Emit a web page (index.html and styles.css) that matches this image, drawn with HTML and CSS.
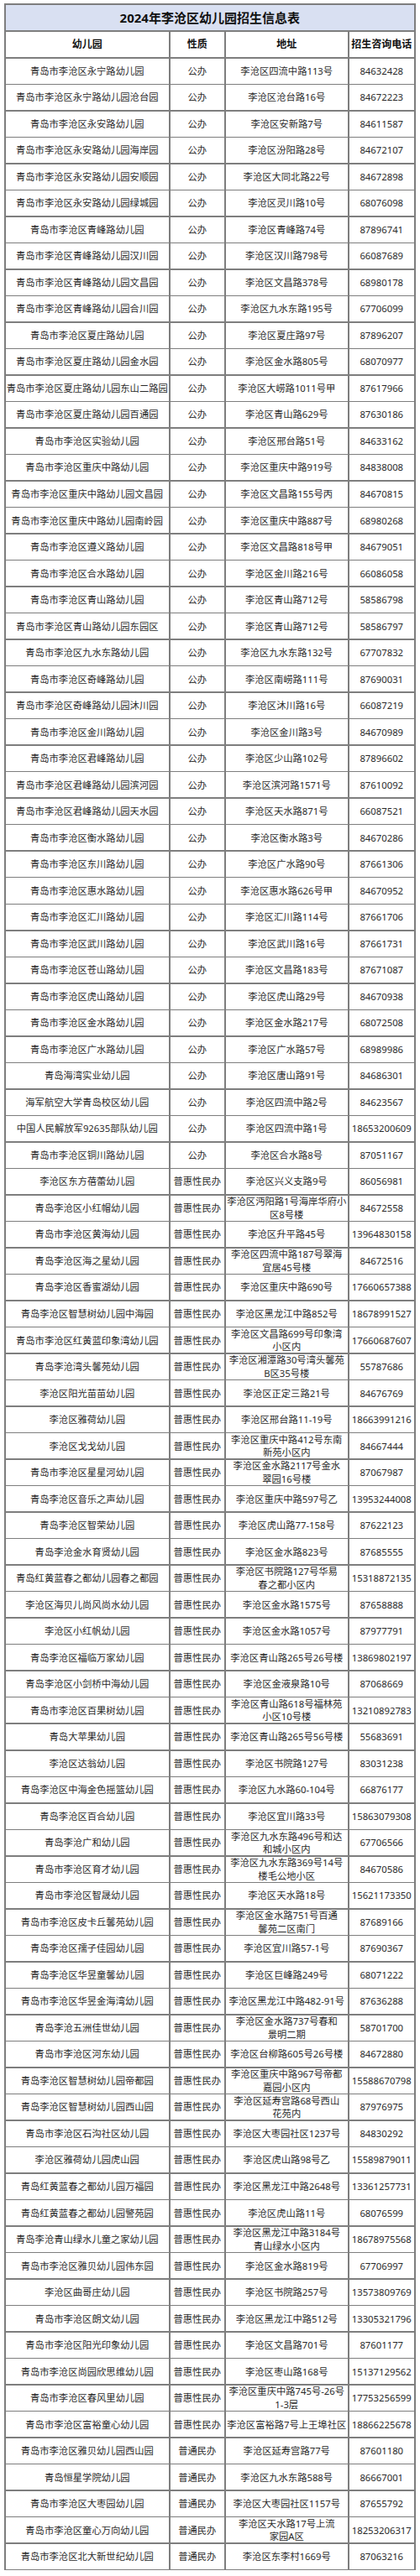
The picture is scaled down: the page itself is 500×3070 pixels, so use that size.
FILE: index.html
```html
<!DOCTYPE html>
<html lang="zh-CN">
<head>
<meta charset="utf-8">
<title>2024年李沧区幼儿园招生信息表</title>
<link rel="stylesheet" href="styles.css">
</head>
<body>
<div class="sheet">
<div class="title">2024年李沧区幼儿园招生信息表</div>
<div class="row head"><div>幼儿园</div><div>性质</div><div>地址</div><div>招生咨询电话</div></div>
<div class="row"><div>青岛市李沧区永宁路幼儿园</div><div>公办</div><div>李沧区四流中路113号</div><div>84632428</div></div>
<div class="row"><div>青岛市李沧区永宁路幼儿园沧台园</div><div>公办</div><div>李沧区沧台路16号</div><div>84672223</div></div>
<div class="row"><div>青岛市李沧区永安路幼儿园</div><div>公办</div><div>李沧区安新路7号</div><div>84611587</div></div>
<div class="row"><div>青岛市李沧区永安路幼儿园海岸园</div><div>公办</div><div>李沧区汾阳路28号</div><div>84672107</div></div>
<div class="row"><div>青岛市李沧区永安路幼儿园安顺园</div><div>公办</div><div>李沧区大同北路22号</div><div>84672898</div></div>
<div class="row"><div>青岛市李沧区永安路幼儿园绿城园</div><div>公办</div><div>李沧区灵川路10号</div><div>68076098</div></div>
<div class="row"><div>青岛市李沧区青峰路幼儿园</div><div>公办</div><div>李沧区青峰路74号</div><div>87896741</div></div>
<div class="row"><div>青岛市李沧区青峰路幼儿园汉川园</div><div>公办</div><div>李沧区汉川路798号</div><div>66087689</div></div>
<div class="row"><div>青岛市李沧区青峰路幼儿园文昌园</div><div>公办</div><div>李沧区文昌路378号</div><div>68980178</div></div>
<div class="row"><div>青岛市李沧区青峰路幼儿园合川园</div><div>公办</div><div>李沧区九水东路195号</div><div>67706099</div></div>
<div class="row"><div>青岛市李沧区夏庄路幼儿园</div><div>公办</div><div>李沧区夏庄路97号</div><div>87896207</div></div>
<div class="row"><div>青岛市李沧区夏庄路幼儿园金水园</div><div>公办</div><div>李沧区金水路805号</div><div>68070977</div></div>
<div class="row"><div>青岛市李沧区夏庄路幼儿园东山二路园</div><div>公办</div><div>李沧区大崂路1011号甲</div><div>87617966</div></div>
<div class="row"><div>青岛市李沧区夏庄路幼儿园百通园</div><div>公办</div><div>李沧区青山路629号</div><div>87630186</div></div>
<div class="row"><div>青岛市李沧区实验幼儿园</div><div>公办</div><div>李沧区邢台路51号</div><div>84633162</div></div>
<div class="row"><div>青岛市李沧区重庆中路幼儿园</div><div>公办</div><div>李沧区重庆中路919号</div><div>84838008</div></div>
<div class="row"><div>青岛市李沧区重庆中路幼儿园文昌园</div><div>公办</div><div>李沧区文昌路155号丙</div><div>84670815</div></div>
<div class="row"><div>青岛市李沧区重庆中路幼儿园南岭园</div><div>公办</div><div>李沧区重庆中路887号</div><div>68980268</div></div>
<div class="row"><div>青岛市李沧区遵义路幼儿园</div><div>公办</div><div>李沧区文昌路818号甲</div><div>84679051</div></div>
<div class="row"><div>青岛市李沧区合水路幼儿园</div><div>公办</div><div>李沧区金川路216号</div><div>66086058</div></div>
<div class="row"><div>青岛市李沧区青山路幼儿园</div><div>公办</div><div>李沧区青山路712号</div><div>58586798</div></div>
<div class="row"><div>青岛市李沧区青山路幼儿园东园区</div><div>公办</div><div>李沧区青山路712号</div><div>58586797</div></div>
<div class="row"><div>青岛市李沧区九水东路幼儿园</div><div>公办</div><div>李沧区九水东路132号</div><div>67707832</div></div>
<div class="row"><div>青岛市李沧区奇峰路幼儿园</div><div>公办</div><div>李沧区南崂路111号</div><div>87690031</div></div>
<div class="row"><div>青岛市李沧区奇峰路幼儿园沐川园</div><div>公办</div><div>李沧区沐川路16号</div><div>66087219</div></div>
<div class="row"><div>青岛市李沧区金川路幼儿园</div><div>公办</div><div>李沧区金川路3号</div><div>84670989</div></div>
<div class="row"><div>青岛市李沧区君峰路幼儿园</div><div>公办</div><div>李沧区少山路102号</div><div>87896602</div></div>
<div class="row"><div>青岛市李沧区君峰路幼儿园滨河园</div><div>公办</div><div>李沧区滨河路1571号</div><div>87610092</div></div>
<div class="row"><div>青岛市李沧区君峰路幼儿园天水园</div><div>公办</div><div>李沧区天水路871号</div><div>66087521</div></div>
<div class="row"><div>青岛市李沧区衡水路幼儿园</div><div>公办</div><div>李沧区衡水路3号</div><div>84670286</div></div>
<div class="row"><div>青岛市李沧区东川路幼儿园</div><div>公办</div><div>李沧区广水路90号</div><div>87661306</div></div>
<div class="row"><div>青岛市李沧区惠水路幼儿园</div><div>公办</div><div>李沧区惠水路626号甲</div><div>84670952</div></div>
<div class="row"><div>青岛市李沧区汇川路幼儿园</div><div>公办</div><div>李沧区汇川路114号</div><div>87661706</div></div>
<div class="row"><div>青岛市李沧区武川路幼儿园</div><div>公办</div><div>李沧区武川路16号</div><div>87661731</div></div>
<div class="row"><div>青岛市李沧区苍山路幼儿园</div><div>公办</div><div>李沧区文昌路183号</div><div>87671087</div></div>
<div class="row"><div>青岛市李沧区虎山路幼儿园</div><div>公办</div><div>李沧区虎山路29号</div><div>84670938</div></div>
<div class="row"><div>青岛市李沧区金水路幼儿园</div><div>公办</div><div>李沧区金水路217号</div><div>68072508</div></div>
<div class="row"><div>青岛市李沧区广水路幼儿园</div><div>公办</div><div>李沧区广水路57号</div><div>68989986</div></div>
<div class="row"><div>青岛海湾实业幼儿园</div><div>公办</div><div>李沧区唐山路91号</div><div>84686301</div></div>
<div class="row"><div>海军航空大学青岛校区幼儿园</div><div>公办</div><div>李沧区四流中路2号</div><div>84623567</div></div>
<div class="row"><div>中国人民解放军92635部队幼儿园</div><div>公办</div><div>李沧区四流中路1号</div><div>18653200609</div></div>
<div class="row"><div>青岛市李沧区铜川路幼儿园</div><div>公办</div><div>李沧区合水路8号</div><div>87051167</div></div>
<div class="row"><div>李沧区东方蓓蕾幼儿园</div><div>普惠性民办</div><div>李沧区兴义支路9号</div><div>86056981</div></div>
<div class="row"><div>青岛李沧区小红帽幼儿园</div><div>普惠性民办</div><div>李沧区沔阳路1号海岸华府小<br>区8号楼</div><div>84672558</div></div>
<div class="row"><div>青岛市李沧区黄海幼儿园</div><div>普惠性民办</div><div>李沧区升平路45号</div><div>13964830158</div></div>
<div class="row"><div>青岛李沧区海之星幼儿园</div><div>普惠性民办</div><div>李沧区四流中路187号翠海<br>宜居45号楼</div><div>84672516</div></div>
<div class="row"><div>青岛李沧区香蜜湖幼儿园</div><div>普惠性民办</div><div>李沧区重庆中路690号</div><div>17660657388</div></div>
<div class="row"><div>青岛李沧区智慧树幼儿园中海园</div><div>普惠性民办</div><div>李沧区黑龙江中路852号</div><div>18678991527</div></div>
<div class="row"><div>青岛市李沧区红黄蓝印象湾幼儿园</div><div>普惠性民办</div><div>李沧区文昌路699号印象湾<br>小区内</div><div>17660687607</div></div>
<div class="row"><div>青岛李沧湾头馨苑幼儿园</div><div>普惠性民办</div><div>李沧区湘潭路30号湾头馨苑<br>B区35号楼</div><div>55787686</div></div>
<div class="row"><div>李沧区阳光苗苗幼儿园</div><div>普惠性民办</div><div>李沧区正定三路21号</div><div>84676769</div></div>
<div class="row"><div>李沧区雅荷幼儿园</div><div>普惠性民办</div><div>李沧区邢台路11-19号</div><div>18663991216</div></div>
<div class="row"><div>李沧区戈戈幼儿园</div><div>普惠性民办</div><div>李沧区重庆中路412号东南<br>新苑小区内</div><div>84667444</div></div>
<div class="row"><div>青岛市李沧区星星河幼儿园</div><div>普惠性民办</div><div>李沧区金水路2117号金水<br>翠园16号楼</div><div>87067987</div></div>
<div class="row"><div>青岛李沧区音乐之声幼儿园</div><div>普惠性民办</div><div>李沧区重庆中路597号乙</div><div>13953244008</div></div>
<div class="row"><div>青岛李沧区智荣幼儿园</div><div>普惠性民办</div><div>李沧区虎山路77-158号</div><div>87622123</div></div>
<div class="row"><div>青岛李沧金水育贤幼儿园</div><div>普惠性民办</div><div>李沧区金水路823号</div><div>87685555</div></div>
<div class="row"><div>青岛红黄蓝春之都幼儿园春之都园</div><div>普惠性民办</div><div>李沧区书院路127号华易<br>春之都小区内</div><div>15318872135</div></div>
<div class="row"><div>李沧区海贝儿尚风尚水幼儿园</div><div>普惠性民办</div><div>李沧区金水路1575号</div><div>87658888</div></div>
<div class="row"><div>李沧区小红帆幼儿园</div><div>普惠性民办</div><div>李沧区金水路1057号</div><div>87977791</div></div>
<div class="row"><div>青岛李沧区福临万家幼儿园</div><div>普惠性民办</div><div>李沧区青山路265号26号楼</div><div>13869802197</div></div>
<div class="row"><div>青岛李沧区小剑桥中海幼儿园</div><div>普惠性民办</div><div>李沧区金液泉路10号</div><div>87068669</div></div>
<div class="row"><div>青岛市李沧区百果树幼儿园</div><div>普惠性民办</div><div>李沧区青山路618号福林苑<br>小区10号楼</div><div>13210892783</div></div>
<div class="row"><div>青岛大苹果幼儿园</div><div>普惠性民办</div><div>李沧区青山路265号56号楼</div><div>55683691</div></div>
<div class="row"><div>李沧区达翁幼儿园</div><div>普惠性民办</div><div>李沧区书院路127号</div><div>83031238</div></div>
<div class="row"><div>青岛李沧区中海金色摇篮幼儿园</div><div>普惠性民办</div><div>李沧区九水路60-104号</div><div>66876177</div></div>
<div class="row"><div>青岛李沧区百合幼儿园</div><div>普惠性民办</div><div>李沧区宜川路33号</div><div>15863079308</div></div>
<div class="row"><div>青岛李沧广和幼儿园</div><div>普惠性民办</div><div>李沧区九水东路496号和达<br>和城小区内</div><div>67706566</div></div>
<div class="row"><div>青岛市李沧区育才幼儿园</div><div>普惠性民办</div><div>李沧区九水东路369号14号<br>楼毛公地小区</div><div>84670586</div></div>
<div class="row"><div>青岛市李沧区智晟幼儿园</div><div>普惠性民办</div><div>李沧区天水路18号</div><div>15621173350</div></div>
<div class="row"><div>青岛市李沧区皮卡丘馨苑幼儿园</div><div>普惠性民办</div><div>李沧区金水路751号百通<br>馨苑二区南门</div><div>87689166</div></div>
<div class="row"><div>青岛李沧区孺子佳园幼儿园</div><div>普惠性民办</div><div>李沧区宜川路57-1号</div><div>87690367</div></div>
<div class="row"><div>青岛李沧区华昱童馨幼儿园</div><div>普惠性民办</div><div>李沧区巨峰路249号</div><div>68071222</div></div>
<div class="row"><div>青岛市李沧区华昱金海湾幼儿园</div><div>普惠性民办</div><div>李沧区黑龙江中路482-91号</div><div>87636288</div></div>
<div class="row"><div>青岛李沧五洲佳世幼儿园</div><div>普惠性民办</div><div>李沧区金水路737号春和<br>景明二期</div><div>58701700</div></div>
<div class="row"><div>青岛市李沧区河东幼儿园</div><div>普惠性民办</div><div>李沧区台柳路605号26号楼</div><div>84672880</div></div>
<div class="row"><div>青岛李沧区智慧树幼儿园帝都园</div><div>普惠性民办</div><div>李沧区重庆中路967号帝都<br>嘉园小区内</div><div>15588670798</div></div>
<div class="row"><div>青岛李沧区智慧树幼儿园西山园</div><div>普惠性民办</div><div>李沧区延寿宫路68号西山<br>花苑内</div><div>87976975</div></div>
<div class="row"><div>青岛市李沧区石沟社区幼儿园</div><div>普惠性民办</div><div>李沧区大枣园社区1237号</div><div>84830292</div></div>
<div class="row"><div>李沧区雅荷幼儿园虎山园</div><div>普惠性民办</div><div>李沧区虎山路98号乙</div><div>15589879011</div></div>
<div class="row"><div>青岛红黄蓝春之都幼儿园万福园</div><div>普惠性民办</div><div>李沧区黑龙江中路2648号</div><div>13361257731</div></div>
<div class="row"><div>青岛红黄蓝春之都幼儿园警苑园</div><div>普惠性民办</div><div>李沧区虎山路11号</div><div>68076599</div></div>
<div class="row"><div>青岛李沧青山绿水儿童之家幼儿园</div><div>普惠性民办</div><div>李沧区黑龙江中路3184号<br>青山绿水小区内</div><div>18678975568</div></div>
<div class="row"><div>青岛市李沧区雅贝幼儿园伟东园</div><div>普惠性民办</div><div>李沧区金水路819号</div><div>67706997</div></div>
<div class="row"><div>李沧区曲哥庄幼儿园</div><div>普惠性民办</div><div>李沧区书院路257号</div><div>13573809769</div></div>
<div class="row"><div>青岛市李沧区朗文幼儿园</div><div>普惠性民办</div><div>李沧区黑龙江中路512号</div><div>13305321796</div></div>
<div class="row"><div>青岛市李沧区阳光印象幼儿园</div><div>普惠性民办</div><div>李沧区文昌路701号</div><div>87601177</div></div>
<div class="row"><div>青岛市李沧区尚园欣思维幼儿园</div><div>普惠性民办</div><div>李沧区枣山路168号</div><div>15137129562</div></div>
<div class="row"><div>青岛市李沧区春风里幼儿园</div><div>普惠性民办</div><div>李沧区重庆中路745号-26号<br>1-3层</div><div>17753256599</div></div>
<div class="row"><div>青岛市李沧区富裕童心幼儿园</div><div>普惠性民办</div><div>李沧区富裕路7号上王埠社区</div><div>18866225678</div></div>
<div class="row"><div>青岛市李沧区雅贝幼儿园西山园</div><div>普通民办</div><div>李沧区延寿宫路77号</div><div>87601180</div></div>
<div class="row"><div>青岛恒星学院幼儿园</div><div>普通民办</div><div>李沧区九水东路588号</div><div>86667001</div></div>
<div class="row"><div>青岛市李沧区大枣园幼儿园</div><div>普通民办</div><div>李沧区大枣园社区1157号</div><div>87655792</div></div>
<div class="row"><div>青岛市李沧区童心万向幼儿园</div><div>普通民办</div><div>李沧区天水路17号上流<br>家园A区</div><div>18253206317</div></div>
<div class="row"><div>青岛市李沧区北大新世纪幼儿园</div><div>普通民办</div><div>李沧区东李村1669号</div><div>87063216</div></div>
</div>
</body>
</html>
```
FILE: styles.css
```css
html, body {
  margin: 0;
  padding: 0;
  background: #ffffff;
}

body {
  padding: 4px 0 0 5px;
  font-family: "Noto Sans", "Noto Sans CJK SC", sans-serif;
  color: #2a2a2a;
}

/* Grid table: the container background shows through the gaps as the cell borders */
.sheet {
  display: grid;
  width: max-content;
  grid-template-columns: 194.5px 64.5px 145.5px 77.5px;
  grid-template-rows: 30.5px 30.5px repeat(95, 30.03px);
  gap: 1.5px;
  padding: 1.5px;
  background: #7e7e7e;
}

.row {
  display: contents;
}

.title,
.row > div {
  display: flex;
  align-items: center;
  justify-content: center;
  text-align: center;
  white-space: nowrap;
  background: #ffffff;
  overflow: visible;
}

.title {
  grid-column: 1 / -1;
  background: #d9e0f2;
  font-size: 15px;
  font-weight: 700;
  color: #111111;
}

.row > div {
  font-size: 11.3px;
  line-height: 15.5px;
  color: #2a2a2a;
}

.row.head > div {
  font-size: 12px;
  font-weight: 700;
  color: #111111;
}
```
